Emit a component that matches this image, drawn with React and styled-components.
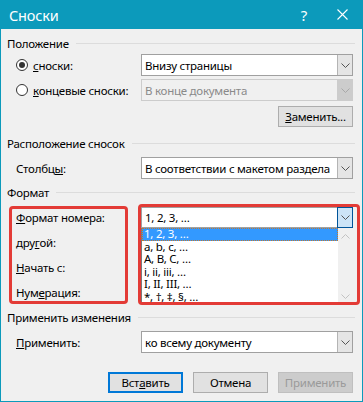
import React from "react";
import styled, { createGlobalStyle } from "styled-components";

const GlobalStyle = createGlobalStyle`
  html, body {
    margin: 0;
    padding: 0;
    background: #f0f0f0;
  }
  body {
    font-family: "Noto Sans", "Segoe UI", sans-serif;
    font-size: 11.5px;
    letter-spacing: -0.25px;
    color: #000;
  }
`;

const Window = styled.div`
  position: relative;
  width: 363px;
  height: 402px;
  box-sizing: border-box;
  border: 1px solid #0c9abb;
  border-top: none;
  background: #f0f0f0;
  display: flex;
  flex-direction: column;
`;

const TitleBar = styled.div`
  height: 29px;
  flex: none;
  display: flex;
  align-items: center;
  background: #0c9abb;
  color: #fff;
  padding-left: 9px;
  margin: 0 -1px;
  padding-right: 15px;
`;

const Title = styled.div`
  flex: 1;
  font-size: 14.5px;
  letter-spacing: -0.2px;
`;

const Help = styled.div`
  font-size: 15px;
  margin-right: 30px;
`;

const Content = styled.div`
  padding: 6px 7px 0 6px;
  display: flex;
  flex-direction: column;
`;

const SectionHeader = styled.div`
  display: flex;
  align-items: center;
  height: 16px;
  gap: 7px;
  margin-top: ${(p) => p.$mt || 0}px;
  white-space: nowrap;
  &::after {
    content: "";
    flex: 1;
    height: 1px;
    background: #dcdcdc;
  }
`;

const Row = styled.div`
  display: grid;
  grid-template-columns: 125px 212px;
  align-items: center;
  padding-left: 9px;
  height: 22px;
  margin-top: ${(p) => p.$mt || 0}px;
`;

const Label = styled.div`
  display: flex;
  align-items: center;
  gap: 5px;
  white-space: nowrap;
`;

const Radio = styled.span`
  width: 12px;
  height: 12px;
  flex: none;
  box-sizing: border-box;
  border: 1px solid #333;
  border-radius: 50%;
  background: #fff;
  display: flex;
  align-items: center;
  justify-content: center;
  &::after {
    content: "";
    width: 6px;
    height: 6px;
    border-radius: 50%;
    background: ${(p) => (p.$checked ? "#333" : "transparent")};
  }
`;

const ComboBox = styled.div`
  display: flex;
  height: ${(p) => p.$h || 22}px;
  box-sizing: border-box;
  border: 1px solid ${(p) => (p.$disabled ? "#cccccc" : "#a0a0a0")};
  background: ${(p) => (p.$disabled ? "#f0f0f0" : "#fff")};
  color: ${(p) => (p.$disabled ? "#8a8a8a" : "#000")};
  margin-top: ${(p) => p.$mt || 0}px;
`;

const ComboText = styled.div`
  flex: 1;
  display: flex;
  align-items: center;
  padding-left: 3px;
  white-space: nowrap;
  overflow: hidden;
`;

const DropButton = styled.div`
  width: 15px;
  flex: none;
  display: flex;
  align-items: center;
  justify-content: center;
  box-sizing: border-box;
  background: ${(p) =>
    p.$focused ? "#cce4f7" : p.$disabled ? "#cccccc" : "#e5e5e5"};
  border-left: 1px solid ${(p) => (p.$disabled ? "#cccccc" : "#b4b4b4")};
  ${(p) =>
    p.$focused &&
    `border: 1px solid #005499; margin: -1px -1px -1px 0; width: 16px;`}
`;

const Chevron = ({ up, color = "#555" }) => (
  <svg width="9" height="5" viewBox="0 0 9 5">
    <path
      d={up ? "M0.5 4.5 L4.5 0.5 L8.5 4.5" : "M0.5 0.5 L4.5 4.5 L8.5 0.5"}
      fill="none"
      stroke={color}
      strokeWidth="1"
    />
  </svg>
);

const Combo = ({ value, disabled, focused, h, mt }) => (
  <ComboBox $disabled={disabled} $h={h} $mt={mt}>
    <ComboText>{value}</ComboText>
    <DropButton $disabled={disabled} $focused={focused}>
      <Chevron color={disabled ? "#a8a8a8" : "#555"} />
    </DropButton>
  </ComboBox>
);

const ButtonRow = styled.div`
  display: flex;
  justify-content: flex-end;
  gap: 10px;
  padding-right: 2px;
  margin-top: ${(p) => p.$mt || 0}px;
`;

const Button = styled.div`
  width: 75px;
  height: 21px;
  box-sizing: border-box;
  display: flex;
  align-items: center;
  justify-content: center;
  background: ${(p) => (p.$disabled ? "#cccccc" : "#e1e1e1")};
  border: ${(p) =>
    p.$default
      ? "2px solid #0078d7"
      : p.$disabled
      ? "1px solid #bfbfbf"
      : "1px solid #adadad"};
  color: ${(p) => (p.$disabled ? "#9a9a9a" : "#000")};
`;

const FormatSection = styled.div`
  position: relative;
  display: grid;
  grid-template-columns: 125px 212px;
  padding-left: 9px;
  height: 100px;
  margin-top: ${(p) => p.$mt || 0}px;
`;

const LabelStack = styled.div`
  display: flex;
  flex-direction: column;
`;

const StackLabel = styled.div`
  height: 25px;
  display: flex;
  align-items: center;
  white-space: nowrap;
`;

const DropColumn = styled.div`
  display: flex;
  flex-direction: column;
`;

const ListBox = styled.div`
  display: flex;
  height: 75px;
  box-sizing: border-box;
  border-left: 1px solid #7a7a7a;
  background: #fff;
  overflow: hidden;
`;

const Items = styled.div`
  flex: 1;
  display: flex;
  flex-direction: column;
`;

const Item = styled.div`
  height: 12.6px;
  line-height: 12.6px;
  padding-left: 2px;
  white-space: nowrap;
  flex: none;
  background: ${(p) => (p.$selected ? "#3399ff" : "transparent")};
  color: ${(p) => (p.$selected ? "#fff" : "#000")};
  ${(p) => p.$selected && `outline: 1px dotted #c2782e; outline-offset: -1px;`}
`;

const ScrollBar = styled.div`
  width: 15px;
  flex: none;
  background: #f0f0f0;
  display: flex;
  flex-direction: column;
  justify-content: space-between;
  align-items: center;
  padding: 6px 0 4px;
  box-sizing: border-box;
`;

const RedBox = styled.div`
  position: absolute;
  box-sizing: border-box;
  border: 3px solid #e33b36;
  border-radius: 4px;
  left: ${(p) => p.$x}px;
  top: ${(p) => p.$y}px;
  width: ${(p) => p.$w}px;
  height: ${(p) => p.$h}px;
  pointer-events: none;
`;

const CloseIcon = () => (
  <svg width="11" height="11" viewBox="0 0 11 11">
    <path d="M0.5 0.5 L10.5 10.5 M10.5 0.5 L0.5 10.5" stroke="#fff" strokeWidth="1.1" />
  </svg>
);

const formats = [
  "1, 2, 3, …",
  "a, b, c, …",
  "A, B, C, …",
  "i, ii, iii, …",
  "I, II, III, …",
  "*, †, ‡, §, …",
];

export default function App() {
  return (
    <>
      <GlobalStyle />
      <Window>
        <TitleBar>
          <Title>Сноски</Title>
          <Help>?</Help>
          <CloseIcon />
        </TitleBar>
        <Content>
          <SectionHeader>Положение</SectionHeader>
          <Row $mt={3}>
            <Label>
              <Radio $checked />
              <span>
                <u>с</u>носки:
              </span>
            </Label>
            <Combo value="Внизу страницы" />
          </Row>
          <Row $mt={3}>
            <Label>
              <Radio />
              <span>
                <u>к</u>онцевые сноски:
              </span>
            </Label>
            <Combo value="В конце документа" disabled />
          </Row>
          <ButtonRow $mt={5}>
            <Button>
              <span>
                <u>З</u>аменить...
              </span>
            </Button>
          </ButtonRow>

          <SectionHeader $mt={8}>Расположение сносок</SectionHeader>
          <Row $mt={6}>
            <Label>
              <span>
                Столбц<u>ы</u>:
              </span>
            </Label>
            <Combo value="В соответствии с макетом раздела" />
          </Row>

          <SectionHeader $mt={5}>Формат</SectionHeader>
          <FormatSection $mt={5}>
            <LabelStack>
              <StackLabel>
                <span>
                  <u>Ф</u>ормат номера:
                </span>
              </StackLabel>
              <StackLabel>
                <span>
                  дру<u>г</u>ой:
                </span>
              </StackLabel>
              <StackLabel>
                <span>
                  <u>Н</u>ачать с:
                </span>
              </StackLabel>
              <StackLabel>
                <span>
                  Нум<u>е</u>рация:
                </span>
              </StackLabel>
            </LabelStack>
            <DropColumn>
              <Combo value="1, 2, 3, …" focused h={21} mt={2} />
              <ListBox>
                <Items>
                  {formats.map((f, i) => (
                    <Item key={f} $selected={i === 0}>
                      {f}
                    </Item>
                  ))}
                </Items>
                <ScrollBar>
                  <Chevron up color="#c2c2c2" />
                  <Chevron color="#c2c2c2" />
                </ScrollBar>
              </ListBox>
            </DropColumn>
            <RedBox $x={2} $y={1} $w={119} $h={98} />
            <RedBox $x={131} $y={-1} $w={222} $h={101} />
          </FormatSection>

          <SectionHeader $mt={4}>Применить изменения</SectionHeader>
          <Row $mt={6}>
            <Label>
              <span>
                <u>П</u>рименить:
              </span>
            </Label>
            <Combo value="ко всему документу" />
          </Row>

          <ButtonRow $mt={19}>
            <Button $default>
              <span>
                Вст<u>а</u>вить
              </span>
            </Button>
            <Button>Отмена</Button>
            <Button $disabled>Применить</Button>
          </ButtonRow>
        </Content>
      </Window>
    </>
  );
}
